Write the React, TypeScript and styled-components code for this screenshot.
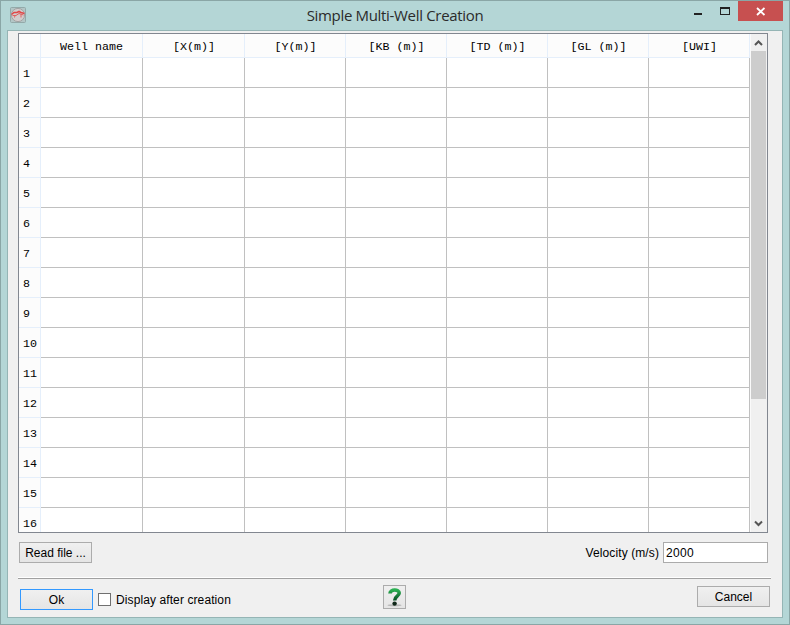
import React from 'react';
import styled, { createGlobalStyle } from 'styled-components';

const GlobalStyle = createGlobalStyle`
  *, *::before, *::after { box-sizing: border-box; }
  body { margin: 0; background: #b4d6d6; }
  button, input { margin: 0; font: inherit; color: inherit; border-radius: 0; }
`;

const Window = styled.div`
  width: 790px;
  height: 625px;
  display: flex;
  flex-direction: column;
  padding: 0 6px 6px;
  border: 1px solid #8aa6a6;
  background: #b4d6d6;
  font: 12px/14px 'Liberation Sans', Arial, sans-serif;
  color: #000;
  overflow: hidden;
`;

const TitleBar = styled.header`
  display: grid;
  grid-template-columns: 144px 1fr 144px;
  height: 29px;
  flex: none;
`;

const AppIcon = styled.svg`
  width: 16px;
  height: 16px;
  margin: 6px 0 0 3px;
`;

const Title = styled.h1`
  margin: 0;
  padding-top: 4px;
  font: 400 15px/20px 'Open Sans', 'Noto Sans', sans-serif;
  letter-spacing: -0.32px;
  color: #2b2b2b;
  text-align: center;
  white-space: nowrap;
`;

const Controls = styled.div`
  display: flex;
  justify-content: flex-end;
  align-items: flex-start;
`;

const WindowButton = styled.button<{ $width: number; $close?: boolean }>`
  display: block;
  width: ${(p) => p.$width}px;
  height: 20px;
  padding: 0;
  border: 0;
  background: ${(p) => (p.$close ? '#c75050' : 'transparent')};

  svg { display: block; }
`;

const Client = styled.main`
  flex: none;
  width: 776px;
  height: 588px;
  border: 1px solid #95b5b5;
  background: #f0f0f0;
  padding: 2px 11px 0 10px;
`;

const TableFrame = styled.div`
  display: flex;
  width: 750px;
  height: 500px;
  border: 1px solid #828790;
  background: #fff;
  overflow: hidden;
`;

const Grid = styled.div`
  display: grid;
  flex: none;
  grid-template-columns: 22px 102px 102px repeat(5, 101px);
  grid-template-rows: 24px;
  grid-auto-rows: 30px;
  font: 11.67px/14px 'Liberation Mono', 'Courier New', monospace;
`;

const HeadCell = styled.div<{ $nudge?: boolean }>`
  display: flex;
  align-items: center;
  justify-content: center;
  padding: 2px 0 0 ${(p) => (p.$nudge ? 1 : 0)}px;
  border: solid #e5effb;
  border-width: 0 1px 1px 0;
  background: #fcfcfc;
  white-space: pre;
`;

const RowHead = styled(HeadCell)`
  justify-content: flex-start;
  padding: 2px 0 0 4px;
`;

const Cell = styled.div`
  border: solid #c0c0c0;
  border-width: 0 1px 1px 0;
`;

const ScrollBar = styled.div`
  display: flex;
  flex-direction: column;
  width: 17px;
  padding-right: 1px;
  background: #f0f0f0;
  border-left: 1px solid #fafafa;
`;

const ScrollArrow = styled.svg`
  flex: none;
  width: 15px;
  height: 17px;
`;

const ScrollTrack = styled.div`
  flex: 1;
`;

const ScrollThumb = styled.div`
  height: 348px;
  background: #cdcdcd;
`;

const ToolRow = styled.div`
  display: flex;
  align-items: center;
  height: 21px;
  margin: 9px 3px 0 1px;
`;

const PushButton = styled.button<{ $default?: boolean }>`
  width: 73px;
  height: 21px;
  padding: 0;
  border: 1px solid ${(p) => (p.$default ? '#3399ff' : '#acacac')};
  background: linear-gradient(#f0f0f0, #e5e5e5);
  text-align: center;
  white-space: nowrap;
`;

const VelocityLabel = styled.label`
  display: flex;
  align-items: center;
  gap: 4px;
  margin-left: auto;
  letter-spacing: 0.1px;
`;

const VelocityInput = styled.input`
  width: 105px;
  height: 21px;
  padding: 0 2px;
  border: 1px solid #ababab;
  background: #fff;
  letter-spacing: 0.3px;
  outline: none;
`;

const Separator = styled.div`
  height: 2px;
  margin-top: 14px;
  border-top: 1px solid #fff;
  border-bottom: 1px solid #a0a0a0;
`;

const Footer = styled.footer`
  display: flex;
  align-items: flex-start;
  padding: 6px 1px 0 2px;
`;

const Confirm = styled.div`
  display: flex;
  align-items: center;
  width: 363px;
  margin-top: 4px;
`;

const CheckLabel = styled.label`
  display: flex;
  align-items: center;
  gap: 5px;
  margin-left: 5px;
  letter-spacing: 0.1px;
`;

const CheckBox = styled.input`
  appearance: none;
  width: 13px;
  height: 13px;
  border: 1px solid #707070;
  background: #fff;
`;

const HelpButton = styled.button`
  width: 23px;
  height: 24px;
  padding: 0;
  border: 1px solid #acacac;
  background: linear-gradient(#f0f0f0, #e5e5e5);

  svg { display: block; }
`;

const CancelSlot = styled.div`
  display: flex;
  margin: 1px 0 0 auto;
`;

const columns = ['Well name', '[X(m)]', '[Y(m)]', '[KB (m)]', '[TD (m)]', '[GL (m)]', '[UWI]'];
const rows = Array.from({ length: 16 }, (_, i) => i + 1);

export default function App() {
  return (
    <>
      <GlobalStyle />
      <Window>
        <TitleBar>
          <AppIcon viewBox="0 0 16 16">
            <rect x=".5" y=".5" width="15" height="15" rx="1" fill="#b3c6c6" stroke="#93a9a9" />
            <circle cx="8" cy="8" r="6.6" fill="#d2cccc" stroke="#a3a3a3" />
            <path d="M1.500 7.500L4 5.500H7L9 4.500L11 5.500L14.500 6.500" fill="none" stroke="#e04848" strokeWidth="1.600" />
            <path d="M2.500 8.500H6L9 6.500L13.500 8M5 8.500L4.500 10.500M11 7V10.500" fill="none" stroke="#e06060" />
          </AppIcon>
          <Title>Simple Multi-Well Creation</Title>
          <Controls>
            <WindowButton $width={27} aria-label="Minimize">
              <svg width="27" height="20"><rect x="10" y="12" width="8" height="2" fill="#222" /></svg>
            </WindowButton>
            <WindowButton $width={27} aria-label="Maximize">
              <svg width="27" height="20"><path d="M9 6h10v8H9zM10 8v5h8V8z" fill="#222" fillRule="evenodd" /></svg>
            </WindowButton>
            <WindowButton $width={45} $close aria-label="Close">
              <svg width="45" height="20"><path d="M19 7L26.500 14M26.500 7L19 14" stroke="#fff" strokeWidth="1.800" /></svg>
            </WindowButton>
          </Controls>
        </TitleBar>
        <Client>
          <TableFrame>
            <Grid>
              <HeadCell />
              {columns.map((c) => <HeadCell key={c} $nudge={c.startsWith('[')}>{c}</HeadCell>)}
              {rows.map((r) => (
                <React.Fragment key={r}>
                  <RowHead>{r}</RowHead>
                  {columns.map((c) => <Cell key={c} />)}
                </React.Fragment>
              ))}
            </Grid>
            <ScrollBar>
              <ScrollArrow viewBox="0 0 15 17"><path d="M4 11L7.500 7.500L11 11" fill="none" stroke="#555" strokeWidth="2" /></ScrollArrow>
              <ScrollTrack><ScrollThumb /></ScrollTrack>
              <ScrollArrow viewBox="0 0 15 17"><path d="M4 6.500L7.500 10L11 6.500" fill="none" stroke="#555" strokeWidth="2" /></ScrollArrow>
            </ScrollBar>
          </TableFrame>
          <ToolRow>
            <PushButton>Read file ...</PushButton>
            <VelocityLabel>
              Velocity (m/s)
              <VelocityInput defaultValue="2000" />
            </VelocityLabel>
          </ToolRow>
          <Separator />
          <Footer>
            <Confirm>
              <PushButton $default>Ok</PushButton>
              <CheckLabel>
                <CheckBox type="checkbox" />
                Display after creation
              </CheckLabel>
            </Confirm>
            <HelpButton aria-label="Help">
              <svg width="21" height="22" viewBox="0 0 21 22">
                <defs>
                  <linearGradient id="hook" x1="0" y1="0" x2="0" y2="1">
                    <stop offset="0" stopColor="#2bb052" />
                    <stop offset="1" stopColor="#064d22" />
                  </linearGradient>
                </defs>
                <ellipse cx="10.500" cy="19.300" rx="7" ry="1" fill="#b8b8b8" />
                <path d="M6 7.500C6 3 15.300 3 15.200 7C15.100 10.500 10.700 9.800 10.700 14.500" fill="none" stroke="url(#hook)" strokeWidth="3.600" />
                <circle cx="10.600" cy="17.600" r="2.200" fill="#10281a" />
              </svg>
            </HelpButton>
            <CancelSlot><PushButton>Cancel</PushButton></CancelSlot>
          </Footer>
        </Client>
      </Window>
    </>
  );
}
